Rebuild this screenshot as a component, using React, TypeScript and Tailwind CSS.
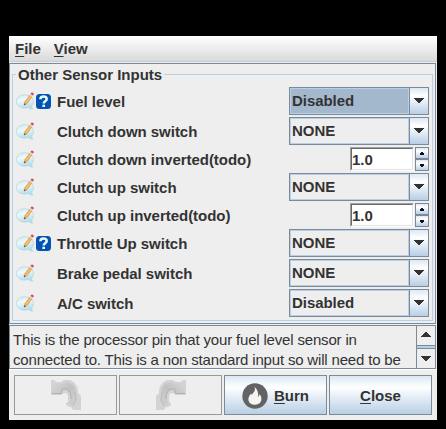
import React from 'react';

const FONT = "font-['Liberation_Sans',Arial,sans-serif]";

function NoteIcon() {
  return (
    <svg width="18" height="18" viewBox="0 0 18 18" className="block shrink-0">
      <defs>
        <linearGradient id="bubble" x1="0" y1="0" x2="0.3" y2="1">
          <stop offset="0" stopColor="#cfe9f2" />
          <stop offset="0.45" stopColor="#eef9fd" />
          <stop offset="1" stopColor="#b0dded" />
        </linearGradient>
      </defs>
      <path d="M8.600 2.800C4 2.800.5 5.700.5 9.500s3.500 6.600 8.100 6.600c1.500 0 2.800-.2 3.900-.7 1.100 1.200 2.500 1.800 4.400 1.700-1-.9-1.300-2-1.200-3.200 1.100-1.200 1.800-2.600 1.800-4.400 0-3.800-4.100-6.700-8.900-6.700z" fill="url(#bubble)" stroke="#b3d6e2" strokeWidth="0.8" />
      <path d="M8 13.200l.7-3.400 4.900-6.500 2.500 1.700-5.100 6.700z" fill="#f3a94a" stroke="#cf8c4c" strokeWidth="0.4" />
      <path d="M9.900 10.600l4.600-6" stroke="#ffd58a" strokeWidth="0.9" />
      <path d="M8 13.200l.4-1.900 1.400.9z" fill="#444" />
      <path d="M13.400 3.300l1.100-1.400 2.300 1.600-1.100 1.400z" fill="#d3d9e0" />
      <path d="M14.500 1.900l.8-1.200 1-.3 1.400 1v1.100l-.8 1z" fill="#d0465c" />
    </svg>
  );
}

function HelpIcon() {
  return (
    <svg width="15" height="15" viewBox="0 0 15 15" className="mt-px ml-[2px] block shrink-0">
      <rect width="15" height="15" rx="3.500" fill="#0553b0" />
      <path d="M4.400 5.300C4.400 3.200 5.600 2.400 7.500 2.400s3.200.8 3.200 2.600c0 2.200-3 2.100-3 4.400" fill="none" stroke="#e6fbff" strokeWidth="2.500" />
      <rect x="6.400" y="10.700" width="2.600" height="2.300" fill="#e6fbff" />
    </svg>
  );
}

function Triangle({ up = false }: { up?: boolean }) {
  return (
    <svg width="10" height="5" viewBox="0 0 10 5" shapeRendering="crispEdges" className={up ? 'block rotate-180' : 'block'}>
      <path d="M0 0h10v1H9v1H8v1H7v1H6v1H4V4H3V3H2V2H1V1H0z" fill="#333" />
    </svg>
  );
}

function Combo({ value, active = false }: { value: string; active?: boolean }) {
  return (
    <div className="flex h-[28px] w-[140px] border border-[#7a8a99]">
      <div className={`flex-1 border border-[#b8cfe5] pl-px text-[15px] leading-[24px] font-bold tracking-[-0.05px] ${active ? 'bg-[#a3b8cc]' : 'bg-[#eeeeee]'}`}>
        {value}
      </div>
      <div className="flex w-[19px] items-center justify-center border-l border-[#7a8a99] bg-linear-to-b from-[#dde8f3] via-white via-30% to-[#b8cfe5] pb-px">
        <Triangle />
      </div>
    </div>
  );
}

function SpinButton({ up = false }: { up?: boolean }) {
  return (
    <div className="flex h-[12px] w-[14px] items-center justify-center border border-[#7a8a99] bg-linear-to-b from-[#dde8f3] via-white via-30% to-[#b8cfe5]">
      <svg width="4" height="3" viewBox="0 0 4 3" shapeRendering="crispEdges" className={up ? 'block rotate-180' : 'block'}>
        <path d="M0 0h4v2H3v1H1V2H0z" fill="#111" />
      </svg>
    </div>
  );
}

function Spinner({ value }: { value: string }) {
  return (
    <div className="flex h-[24px] w-[79px] justify-between">
      <div className="w-[64px] border border-t-[#a0a0a0] border-r-white border-b-white border-l-[#a0a0a0]">
        <div className="h-[22px] border border-t-[#696969] border-r-[#e3e3e3] border-b-[#e3e3e3] border-l-[#696969] bg-white text-[15px] leading-[22px] font-bold">
          {value}
        </div>
      </div>
      <div>
        <SpinButton up />
        <SpinButton />
      </div>
    </div>
  );
}

interface Field {
  label: string;
  value: string;
  kind?: 'spin';
  help?: boolean;
  active?: boolean;
}

const fields: Field[] = [
  { label: 'Fuel level', value: 'Disabled', help: true, active: true },
  { label: 'Clutch down switch', value: 'NONE' },
  { label: 'Clutch down inverted(todo)', value: '1.0', kind: 'spin' },
  { label: 'Clutch up switch', value: 'NONE' },
  { label: 'Clutch up inverted(todo)', value: '1.0', kind: 'spin' },
  { label: 'Throttle Up switch', value: 'NONE', help: true },
  { label: 'Brake pedal switch', value: 'NONE' },
  { label: 'A/C switch', value: 'Disabled' },
];

function Row({ field }: { field: Field }) {
  return (
    <div className="flex items-center">
      <div className="flex w-[41px] items-center">
        <NoteIcon />
        {field.help && <HelpIcon />}
      </div>
      <div className="flex-1 pt-[2px] text-[15px] leading-[20px] font-bold tracking-[-0.03px] whitespace-nowrap">{field.label}</div>
      {field.kind === 'spin' ? <Spinner value={field.value} /> : <Combo value={field.value} active={field.active} />}
    </div>
  );
}

function CurvedArrow({ flip = false }: { flip?: boolean }) {
  return (
    <svg width="30" height="30" viewBox="0 0 30 30" className={flip ? 'block -scale-x-100' : 'block'}>
      <defs>
        <linearGradient id="arrow" x1="0" y1="0" x2="1" y2="1">
          <stop offset="0" stopColor="#d8d8d8" />
          <stop offset="0.5" stopColor="#c2c2c2" />
          <stop offset="1" stopColor="#d2d2d2" />
        </linearGradient>
      </defs>
      <path d="M0 0h3l2 2h5l3-2h6c3 1 5 3 6 5 2 2 2 6 2 8l3 3v14h-8l-2-3h-3v-1l-2-1v-2l2-1v-5c0-2-1-4-3-4l-3 1v1H0z" fill="#d3d3d3" />
      <path d="M1 1l4 3h6l4-2c6 0 10 5 10 11l1 8-4 6-4-4 2-4c0-6-3-9-6-9-3 0-3 1-3 4H1z" fill="url(#arrow)" />
      <path d="M1 13.500h10M11 13V9.500c2-1.500 5-1 7 1.500 1.500 2 2 5 2 8" fill="none" stroke="#b2b2b2" strokeWidth="1" />
      <path d="M24 12l1 8-3 6" fill="none" stroke="#bdbdbd" strokeWidth="1" />
    </svg>
  );
}

function FlameIcon() {
  return (
    <svg width="26" height="26" viewBox="0 0 26 26" className="block">
      <circle cx="13" cy="13" r="12.700" fill="#636363" />
      <path d="M12.600 4c.8 3 .2 4.300-1.500 6.100-.6.7-.9 1.300-1 2-.5-.5-.7-1.100-.7-1.700-2 1.700-3 3.700-3 5.800 0 3.400 2.700 5.500 6.500 5.500s6.500-2.200 6.500-5.700c0-1.800-.6-3.300-1.800-4.900-.1 1.300-.6 2.200-1.500 2.800.5-3.900-.5-7.500-3.500-9.900z" fill="#f4f4f4" />
    </svg>
  );
}

const actionButton =
  'flex h-[40px] w-[103px] items-center justify-center border border-[#7a8a99] bg-linear-to-b from-[#dde8f3] via-white via-30% to-[#b8cfe5] pt-px text-[15px] font-bold';
const disabledButton = 'flex h-[40px] w-[103px] items-center justify-center border border-[#999999]';

function Mnemonic({ text }: { text: string }) {
  return (
    <span className="leading-[20px] whitespace-nowrap">
      <span className="underline decoration-1 underline-offset-2">{text[0]}</span>
      {text.slice(1)}
    </span>
  );
}

export default function App() {
  return (
    <div className={`h-[429px] w-[446px] overflow-hidden bg-black pt-[36px] pl-[9px] text-[#333333] ${FONT}`}>
      <div className="flex h-[384px] w-[428px] flex-col bg-[#eeeeee]">
        <div className="flex h-[26px] gap-[13px] border-b border-[#cccccc] bg-linear-to-b from-white to-[#dadada] pt-[3px] pl-[6px] text-[15px] font-bold">
          <Mnemonic text="File" />
          <Mnemonic text="View" />
        </div>
        <div className="mt-px h-[261px] w-[427px] border border-[#7a8a99] pt-[10px] pl-[2px]">
          <div className="h-[247px] w-[421px] border border-[#b8cfe5]">
            <div className="-mt-[10px] ml-[3px] h-[20px] w-fit bg-[#eeeeee] px-[2px] text-[15px] leading-[20px] font-bold">
              Other Sensor Inputs
            </div>
            <div className="flex flex-col gap-[2px] pt-[2px] pr-[3px] pl-[3px]">
              {fields.map((field) => (
                <Row key={field.label} field={field} />
              ))}
            </div>
          </div>
        </div>
        <div className="mt-px flex h-[44px] w-[427px] overflow-hidden border border-[#7a8a99]">
          <div className="flex-1 overflow-hidden pt-[4px] pl-[3px] text-[15px] leading-[20px] tracking-[-0.175px] whitespace-nowrap">
            This is the processor pin that your fuel level sensor in
            <br />
            connected to. This is a non standard input so will need to be
          </div>
          <div className="flex w-[19px] flex-col border-l border-[#7a8a99]">
            <div className="flex h-[20px] items-center justify-center border-b border-[#7a8a99] pb-[3px]">
              <Triangle up />
            </div>
            <div className="h-[2px] bg-[#b8cfe5]" />
            <div className="flex h-[20px] items-center justify-center border-t border-[#7a8a99]">
              <Triangle />
            </div>
          </div>
        </div>
        <div className="h-px bg-white" />
        <div className="flex gap-[2px] pt-[5px] pl-[5px]">
          <div className={disabledButton}>
            <CurvedArrow />
          </div>
          <div className={disabledButton}>
            <CurvedArrow flip />
          </div>
          <div className={`${actionButton} gap-[6px]`}>
            <FlameIcon />
            <Mnemonic text="Burn" />
          </div>
          <div className={actionButton}>
            <Mnemonic text="Close" />
          </div>
        </div>
      </div>
    </div>
  );
}
